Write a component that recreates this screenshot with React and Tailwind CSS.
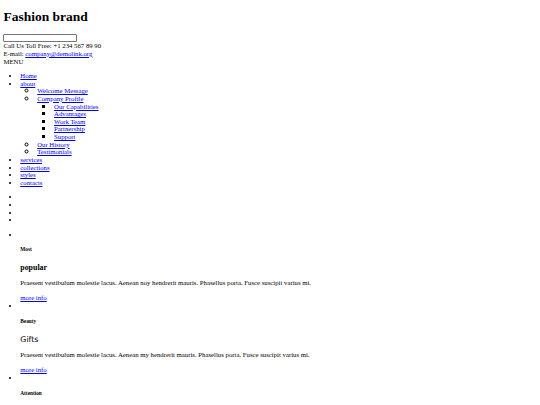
import React from "react";

// Unstyled page look, scaled down (default browser styles at ~0.42x)
const navItems = [
  { label: "Home" },
  {
    label: "about",
    children: [
      { label: "Welcome Message" },
      {
        label: "Company Profile",
        children: ["Our Capabilities", "Advantages", "Work Team", "Partnership", "Support"],
      },
      { label: "Our History" },
      { label: "Testimonials" },
    ],
  },
  { label: "services" },
  { label: "collections" },
  { label: "styles" },
  { label: "contacts" },
];

const offers = [
  {
    small: "Most",
    title: "popular",
    text: "Praesent vestibulum molestie lacus. Aenean noy hendrerit mauris. Phasellus porta. Fusce suscipit varius mi.",
  },
  {
    small: "Beauty",
    title: "Gifts",
    sans: true,
    text: "Praesent vestibulum molestie lacus. Aenean my hendrerit mauris. Phasellus porta. Fusce suscipit varius mi.",
  },
  {
    small: "Attention",
    title: "Sale",
    text: "Praesent vestibulum molestie lacus. Aenean noy hendrerit mauris. Phasellus porta. Fusce suscipit varius mi.",
  },
];

const link = "text-[#0000ee] underline";

export default function App() {
  return (
    <div className="min-h-screen bg-white px-[3.4px] pt-px font-['Liberation_Serif',serif] text-[6.75px] leading-[7.64px] text-black">
      <h1 className="mt-[8px] mb-[9px] text-[13.5px] font-bold leading-[15.5px]">Fashion brand</h1>

      <div className="h-[8.8px]">
        <input
          type="text"
          className="block h-[8.4px] w-[74px] rounded-[1px] border border-[#767676] bg-white"
        />
      </div>
      <div>Call Us Toll Free: +1 234 567 89 90</div>
      <div>
        E-mail: <a className={link}>company@demolink.org</a>
      </div>
      <div>MENU</div>

      <ul className="my-[6.75px] list-disc pl-[16.9px]">
        {navItems.map((item) => (
          <li key={item.label}>
            <a className={link}>{item.label}</a>
            {item.children && (
              <ul className="[list-style-type:circle] pl-[16.9px]">
                {item.children.map((sub) => (
                  <li key={sub.label} className="marker:text-[9px] marker:leading-[7.64px]">
                    <a className={`${link} text-[6.75px]`}>{sub.label}</a>
                    {sub.children && (
                      <ul className="[list-style-type:square] pl-[16.9px] text-[6.75px]">
                        {sub.children.map((s) => (
                          <li key={s} className="marker:text-[6.75px]">
                            <a className={link}>{s}</a>
                          </li>
                        ))}
                      </ul>
                    )}
                  </li>
                ))}
              </ul>
            )}
          </li>
        ))}
      </ul>

      {/* slider dots */}
      <ul className="my-[6.75px] list-disc pl-[16.9px]">
        <li>{"\u00a0"}</li>
        <li>{"\u00a0"}</li>
        <li>{"\u00a0"}</li>
        <li>{"\u00a0"}</li>
      </ul>

      <ul className="my-[6.75px] list-disc pl-[16.9px]">
        {offers.map((o) => (
          <li key={o.small}>
            <div>{"\u00a0"}</div>
            <h6 className="mt-[9.2px] text-[5.3px] font-bold leading-[5.8px]">{o.small}</h6>
            <h3
              className={
                o.sans
                  ? "mt-[10.2px] font-['DejaVu_Sans',sans-serif] text-[7.9px] leading-[9.1px]"
                  : "mt-[9.5px] text-[7.9px] font-bold leading-[9.1px]"
              }
            >
              {o.title}
            </h3>
            <p className="mt-[7.6px] mb-[7.2px]">{o.text}</p>
            <div>
              <a className={link}>more info</a>
            </div>
          </li>
        ))}
      </ul>
    </div>
  );
}
